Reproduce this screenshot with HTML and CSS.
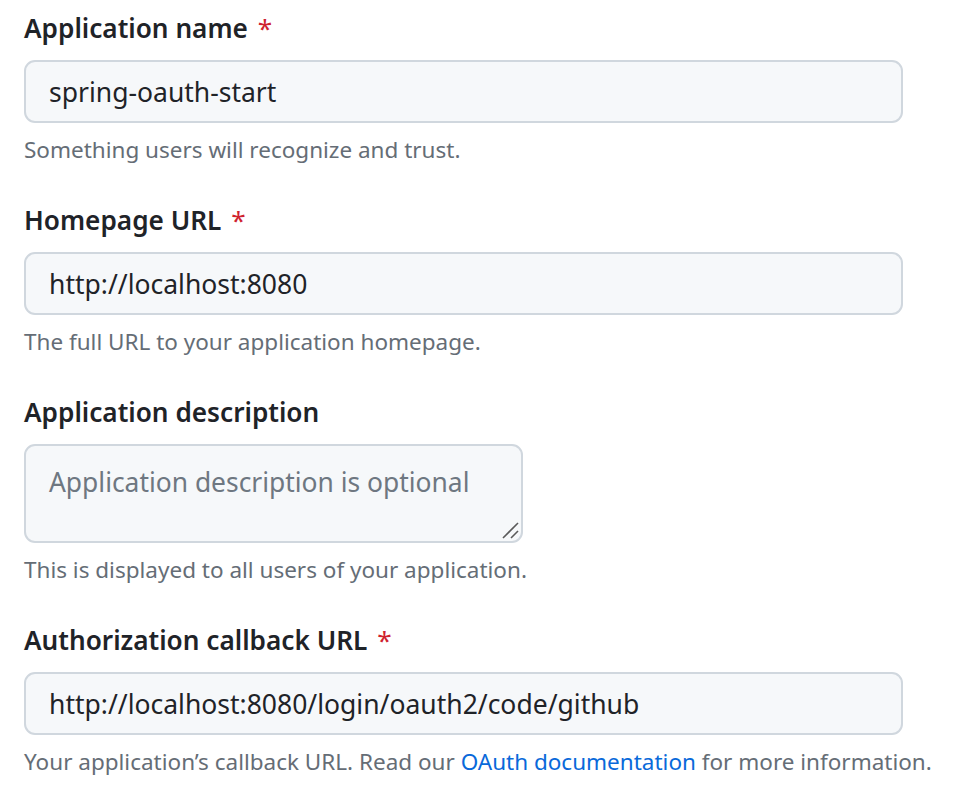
FILE: index.html
```html
<!DOCTYPE html>
<html lang="en">
<head>
<meta charset="utf-8">
<title>Register a new OAuth app</title>
<link rel="stylesheet" href="styles.css">
</head>
<body>
<form class="form">
  <div class="group">
    <label class="label" for="name">Application name <span class="req">*</span></label>
    <input class="field" id="name" type="text" value="spring-oauth-start">
    <p class="note">Something users will recognize and trust.</p>
  </div>
  <div class="group">
    <label class="label" for="home">Homepage URL <span class="req">*</span></label>
    <input class="field" id="home" type="text" value="http://localhost:8080">
    <p class="note">The full URL to your application homepage.</p>
  </div>
  <div class="group">
    <label class="label" for="desc">Application description</label>
    <div class="area-wrap">
      <textarea class="area" id="desc" placeholder="Application description is optional"></textarea>
      <svg class="grip" width="18" height="18" viewBox="0 0 18 18" aria-hidden="true">
        <line x1="1" y1="16" x2="16" y2="1" stroke="#5a5a5a" stroke-width="1.6"/>
        <line x1="9" y1="16" x2="16" y2="9" stroke="#5a5a5a" stroke-width="1.6"/>
      </svg>
    </div>
    <p class="note">This is displayed to all users of your application.</p>
  </div>
  <div class="group">
    <label class="label" for="cb">Authorization callback URL <span class="req">*</span></label>
    <input class="field" id="cb" type="text" value="http://localhost:8080/login/oauth2/code/github">
    <p class="note">Your application’s callback URL. Read our <a class="link" href="#">OAuth documentation</a> for more information.</p>
  </div>
</form>
</body>
</html>
```
FILE: styles.css
```css
html, body {
  margin: 0;
  padding: 0;
  background: #ffffff;
}
body {
  font-family: "Noto Sans", "Open Sans", sans-serif;
  color: #1f2328;
}
.form {
  display: flex;
  flex-direction: column;
  gap: 34px;
  padding: 8px 0 0 24px;
}
.group {
  display: flex;
  flex-direction: column;
  align-items: flex-start;
}
.label {
  font-size: 26.2px;
  font-weight: 600;
  line-height: 40px;
  margin-bottom: 12px;
  color: #1f2328;
}
.req {
  color: #cf222e;
  font-weight: 400;
  margin-left: 3px;
}
.field {
  box-sizing: border-box;
  width: 879px;
  height: 63px;
  margin: 0;
  padding: 0 23px;
  border: 2px solid #d0d7de;
  border-radius: 11px;
  background: #f6f8fa;
  font-family: inherit;
  font-size: 26.5px;
  color: #1f2328;
  outline: none;
}
.area-wrap {
  position: relative;
  width: 499px;
  height: 99px;
}
.area {
  box-sizing: border-box;
  display: block;
  width: 499px;
  height: 99px;
  margin: 0;
  padding: 16px 23px 0;
  border: 2px solid #d0d7de;
  border-radius: 11px;
  background: #f6f8fa;
  font-family: inherit;
  font-size: 26.4px;
  line-height: 40px;
  color: #1f2328;
  resize: none;
  outline: none;
}
.area::placeholder {
  color: #6e7781;
}
.grip {
  position: absolute;
  right: 3px;
  bottom: 3px;
}
.note {
  margin: 11px 0 0;
  font-size: 22.5px;
  line-height: 32px;
  color: #656d76;
}
.link {
  color: #0969da;
  text-decoration: none;
}
```
